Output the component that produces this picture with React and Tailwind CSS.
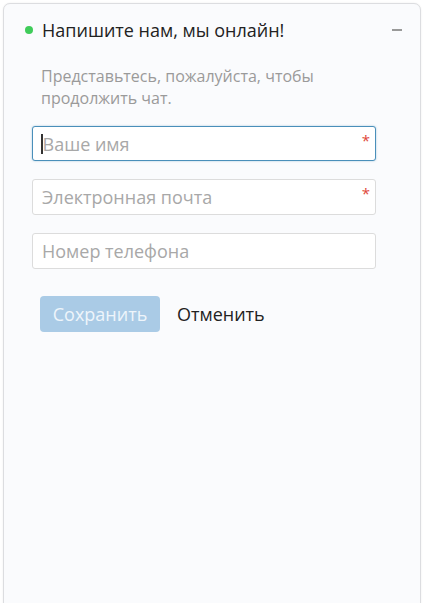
export default function App() {
  const font = { fontFamily: '"Open Sans", "Noto Sans", sans-serif' };
  return (
    <div className="w-[424px] h-[603px] overflow-hidden bg-white" style={font}>
      <div className="mx-[3px] mt-[3px] h-[620px] rounded-t-[7px] border border-[#dcdde0] bg-[#fafbfd] shadow-[0_0_2px_rgba(0,0,0,0.08)]">
        <div className="flex items-center h-[50px] pl-[21px] pr-[18px] pt-[2px]">
          <span className="w-[8px] h-[8px] rounded-full bg-[#3fcc5a]" />
          <span className="ml-[9px] text-[18px] leading-[24px] text-[#222]">Напишите нам, мы онлайн!</span>
          <span className="ml-auto w-[10px] h-[1.5px] bg-[#999]" />
        </div>
        <div className="pl-[28px] pr-[44px]">
          <p className="mt-[11px] pl-[9px] text-[16px] leading-[22px] text-[#9a9a9a]">
            Представьтесь, пожалуйста, чтобы
            <br />
            продолжить чат.
          </p>
          <div className="mt-[17px] flex flex-col gap-[18px]">
            <div className="relative h-[35px] rounded-[3px] border border-[#4a8fba] bg-white shadow-[0_0_2px_rgba(74,143,186,0.5)] flex items-center pl-[8px]">
              <span className="w-[1.5px] h-[20px] bg-[#333]" />
              <span className="text-[18px] text-[#a8a8a8] leading-none">Ваше имя</span>
              <span className="absolute right-[5px] top-[2px] text-[15px] text-[#e0463a]">*</span>
            </div>
            <div className="relative h-[36px] rounded-[3px] border border-[#dcdcdc] bg-white flex items-center pl-[9px]">
              <span className="text-[18px] text-[#a8a8a8] leading-none">Электронная почта</span>
              <span className="absolute right-[5px] top-[2px] text-[15px] text-[#e0463a]">*</span>
            </div>
            <div className="relative h-[36px] rounded-[3px] border border-[#dcdcdc] bg-white flex items-center pl-[9px]">
              <span className="text-[18px] text-[#a8a8a8] leading-none">Номер телефона</span>
            </div>
          </div>
          <div className="mt-[27px] pl-[8px] flex items-center gap-[17px]">
            <div className="w-[120px] h-[36px] rounded-[4px] bg-[#aacbe6] flex items-center justify-center text-[18px] text-[#eef5fb]">
              Сохранить
            </div>
            <span className="text-[18px] text-[#222]">Отменить</span>
          </div>
        </div>
      </div>
    </div>
  );
}
